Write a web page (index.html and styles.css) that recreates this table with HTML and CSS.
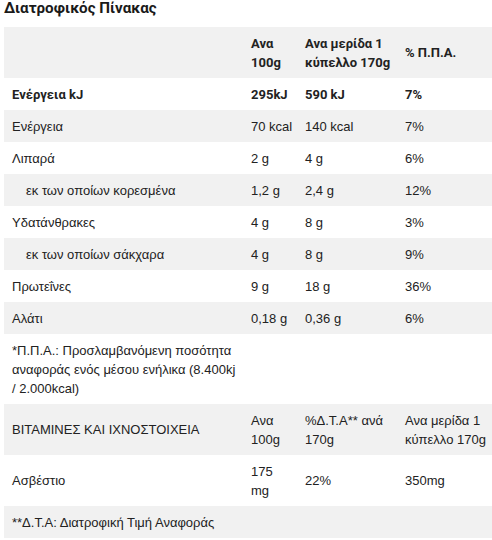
FILE: index.html
```html
<!DOCTYPE html>
<html lang="el">
  <head>
    <meta charset="UTF-8" />
    <meta name="viewport" content="width=device-width, initial-scale=1.0" />
    <title>Διατροφικός Πίνακας</title>
    <link rel="stylesheet" href="styles.css">
  </head>
  <body>
    <div class="nutrition">
      <h2 class="nutrition-title">Διατροφικός Πίνακας</h2>

      <table class="nutrition-table">
        <colgroup>
          <col class="col-name">
          <col class="col-100">
          <col class="col-serving">
          <col class="col-pct">
        </colgroup>
        <tr class="head">
          <td></td>
          <td>Ανα 100g</td>
          <td>Ανα μερίδα 1 κύπελλο 170g</td>
          <td>% Π.Π.Α.</td>
        </tr>
        <tr class="strong">
          <td>Ενέργεια kJ</td>
          <td>295kJ</td>
          <td>590 kJ</td>
          <td>7%</td>
        </tr>
        <tr>
          <td>Ενέργεια</td>
          <td>70 kcal</td>
          <td>140 kcal</td>
          <td>7%</td>
        </tr>
        <tr>
          <td>Λιπαρά</td>
          <td>2 g</td>
          <td>4 g</td>
          <td>6%</td>
        </tr>
        <tr>
          <td class="sub">εκ των οποίων κορεσμένα</td>
          <td>1,2 g</td>
          <td>2,4 g</td>
          <td>12%</td>
        </tr>
        <tr>
          <td>Υδατάνθρακες</td>
          <td>4 g</td>
          <td>8 g</td>
          <td>3%</td>
        </tr>
        <tr>
          <td class="sub">εκ των οποίων σάκχαρα</td>
          <td>4 g</td>
          <td>8 g</td>
          <td>9%</td>
        </tr>
        <tr>
          <td>Πρωτεΐνες</td>
          <td>9 g</td>
          <td>18 g</td>
          <td>36%</td>
        </tr>
        <tr>
          <td>Αλάτι</td>
          <td>0,18 g</td>
          <td>0,36 g</td>
          <td>6%</td>
        </tr>
        <tr>
          <td>*Π.Π.Α.: Προσλαμβανόμενη ποσότητα αναφοράς ενός μέσου ενήλικα (8.400kj / 2.000kcal)</td>
          <td></td>
          <td></td>
          <td></td>
        </tr>
        <tr>
          <td>ΒΙΤΑΜΙΝΕΣ ΚΑΙ ΙΧΝΟΣΤΟΙΧΕΙΑ</td>
          <td>Ανα 100g</td>
          <td>%Δ.Τ.Α** ανά 170g</td>
          <td>Ανα μερίδα 1 κύπελλο 170g</td>
        </tr>
        <tr>
          <td>Ασβέστιο</td>
          <td>175 mg</td>
          <td>22%</td>
          <td>350mg</td>
        </tr>
        <tr>
          <td>**Δ.Τ.Α: Διατροφική Τιμή Αναφοράς</td>
          <td></td>
          <td></td>
          <td></td>
        </tr>
      </table>
    </div>
  </body>
</html>
```

FILE: styles.css
```css
* {
  margin: 0;
  padding: 0;
  box-sizing: border-box;
}

body {
  font-family: 'Liberation Sans', Arial, sans-serif;
  font-size: 13px;
  color: #222;
  background: #fff;
}

.nutrition {
  padding: 0 0 0 4px;
}

.nutrition-title {
  font-family: 'Roboto', 'Liberation Sans', sans-serif;
  font-size: 15.2px;
  font-weight: 700;
  line-height: 20px;
  margin: -2px 0 9px;
  color: #1a1a1a;
}

.nutrition-table {
  width: 100%;
  border-collapse: collapse;
  table-layout: fixed;
}

.col-name {
  width: 239px;
}

.col-100 {
  width: 54px;
}

.col-serving {
  width: 100px;
}

.nutrition-table td {
  padding: 6.5px 4px 6.5px 8px;
  line-height: 19px;
  vertical-align: middle;
  text-align: left;
}

.nutrition-table tr:nth-child(odd) {
  background: #f1f1f1;
}

.nutrition-table .head td,
.nutrition-table .strong td {
  font-family: 'Roboto', 'Liberation Sans', sans-serif;
  font-weight: 700;
}

.nutrition-table td.sub {
  padding-left: 22px;
}
```
